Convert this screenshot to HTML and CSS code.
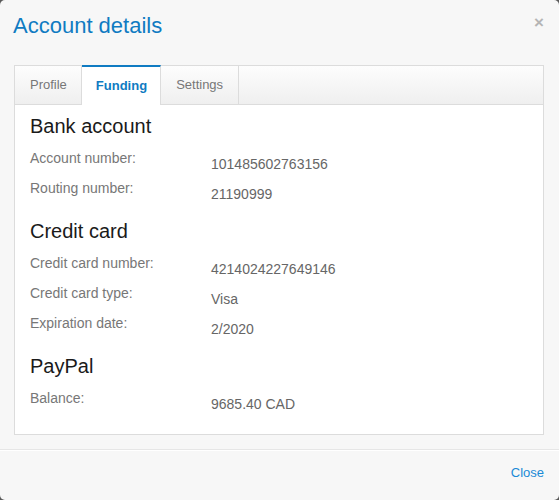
FILE: index.html
```html
<!DOCTYPE html>
<html lang="en">
<head>
<meta charset="utf-8">
<title>Account details</title>
<link rel="stylesheet" href="styles.css">
</head>
<body>
<div class="modal">
  <div class="modal-header">
    <h2 class="modal-title">Account details</h2>
    <span class="modal-close">&times;</span>
  </div>
  <div class="modal-body">
    <div class="tabs">
      <div class="tab-nav">
        <span class="tab">Profile</span>
        <span class="tab active">Funding</span>
        <span class="tab">Settings</span>
      </div>
      <div class="tab-content">
        <h3 class="section-title">Bank account</h3>
        <div class="row"><span class="label">Account number:</span><span class="value">101485602763156</span></div>
        <div class="row"><span class="label">Routing number:</span><span class="value">21190999</span></div>
        <h3 class="section-title">Credit card</h3>
        <div class="row"><span class="label">Credit card number:</span><span class="value">4214024227649146</span></div>
        <div class="row"><span class="label">Credit card type:</span><span class="value">Visa</span></div>
        <div class="row"><span class="label">Expiration date:</span><span class="value">2/2020</span></div>
        <h3 class="section-title">PayPal</h3>
        <div class="row"><span class="label">Balance:</span><span class="value">9685.40 CAD</span></div>
      </div>
    </div>
  </div>
  <div class="modal-footer">
    <span class="close-link">Close</span>
  </div>
</div>
</body>
</html>
```
FILE: styles.css
```css
* { box-sizing: border-box; }
html, body { margin: 0; padding: 0; }
body {
  background: #5a5a5a;
  font-family: "Liberation Sans", Arial, sans-serif;
  width: 559px;
  height: 500px;
  overflow: hidden;
}
.modal {
  width: 559px;
  height: 500px;
  background: #f7f7f7;
  border-radius: 5px;
  display: flex;
  flex-direction: column;
}
.modal-header {
  display: flex;
  justify-content: space-between;
  align-items: flex-start;
  height: 40px;
  padding: 12px 15px 0 13px;
}
.modal-title {
  margin: 0;
  font-size: 22px;
  line-height: 28px;
  font-weight: normal;
  color: #0f7bc2;
}
.modal-close {
  font-size: 17px;
  line-height: 18px;
  font-weight: bold;
  color: #b5b5b5;
  margin-top: 2px;
}
.modal-body {
  padding: 25px 15px 14px 14px;
}
.tabs {
  border: 1px solid #dcdcdc;
  background: #fff;
}
.tab-nav {
  display: flex;
  height: 39px;
  background: linear-gradient(#fdfdfd, #efefef);
  border-bottom: 1px solid #dcdcdc;
}
.tab {
  height: 38px;
  line-height: 38px;
  padding: 0 14px 0 15px;
  font-size: 13px;
  color: #777;
  border-right: 1px solid #dcdcdc;
}
.tab:last-child { padding-right: 15px; }
.tab.active {
  height: 40px;
  margin-top: -1px;
  line-height: 37px;
  padding: 0 13px 0 14px;
  background: #fff;
  color: #0f7bc2;
  font-weight: bold;
  border-top: 2px solid #0f7bc2;
}
.tab-content {
  padding: 10px 15px 16px 15px;
}
.section-title {
  margin: 12px 0 11px;
  font-size: 20px;
  line-height: 22px;
  font-weight: normal;
  color: #1a1a1a;
}
.section-title:first-child { margin-top: 0; }
.row {
  display: grid;
  grid-template-columns: 181px 1fr;
  height: 30px;
  font-size: 14px;
  line-height: 20px;
}
.label { color: #777; }
.value { color: #666; padding-top: 6px; }
.modal-footer {
  flex: 1;
  border-top: 1px solid #e6e6e6;
  box-shadow: inset 0 1px 0 #fff;
  display: flex;
  justify-content: flex-end;
  padding: 14px 15px 0 0;
}
.close-link {
  font-size: 13px;
  line-height: 18px;
  color: #1a8ad6;
}
```
